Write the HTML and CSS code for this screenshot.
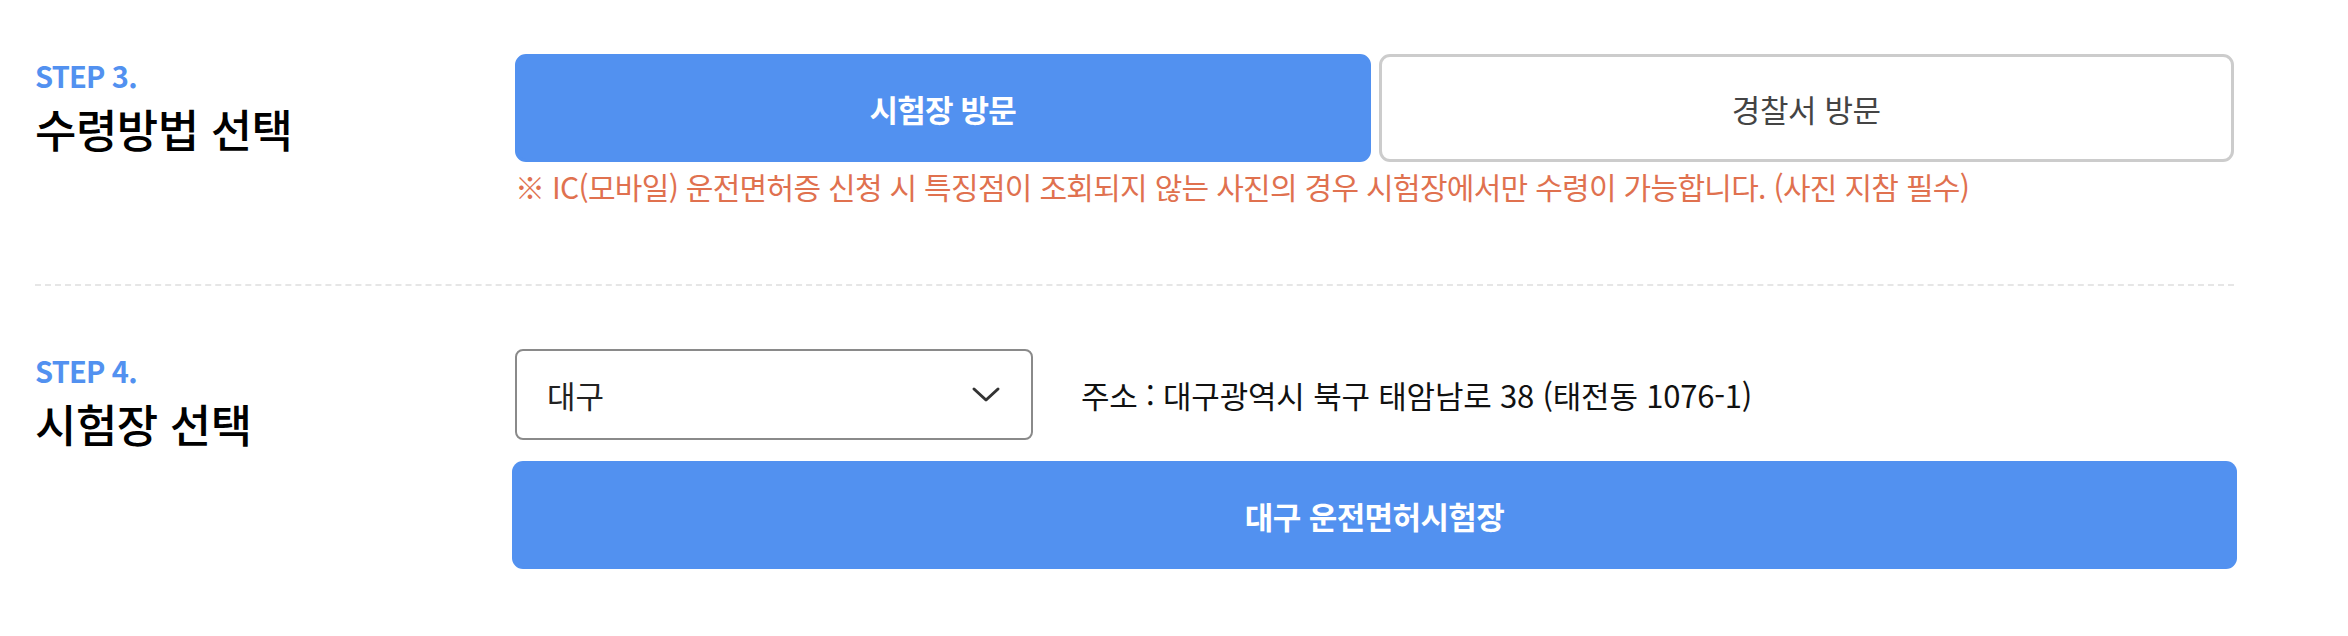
FILE: index.html
```html
<!DOCTYPE html>
<html lang="ko">
<head>
<meta charset="utf-8">
<title>수령방법 / 시험장 선택</title>
<link rel="stylesheet" href="styles.css">
</head>
<body>
<div class="page">
  <section class="step step-3">
    <div class="step-head">
      <p class="step-no">STEP 3.</p>
      <h2 class="step-title">수령방법 선택</h2>
    </div>
    <div class="step-body">
      <div class="toggle">
        <button class="opt opt-active" type="button">시험장 방문</button>
        <button class="opt" type="button">경찰서 방문</button>
      </div>
      <p class="note">※ IC(모바일) 운전면허증 신청 시 특징점이 조회되지 않는 사진의 경우 시험장에서만 수령이 가능합니다. (사진 지참 필수)</p>
    </div>
  </section>
  <div class="divider"></div>
  <section class="step step-4">
    <div class="step-head">
      <p class="step-no">STEP 4.</p>
      <h2 class="step-title">시험장 선택</h2>
    </div>
    <div class="step-body">
      <div class="select-row">
        <div class="select">
          <span class="select-value">대구</span>
          <svg class="chevron" width="30" height="18" viewBox="0 0 30 18" aria-hidden="true"><path d="M3 3 L15 14 L27 3" fill="none" stroke="#333" stroke-width="3" stroke-linecap="round" stroke-linejoin="round"/></svg>
        </div>
        <p class="addr">주소 : 대구광역시 북구 태암남로 38 (태전동 1076-1)</p>
      </div>
      <button class="center-btn" type="button">대구 운전면허시험장</button>
    </div>
  </section>
</div>
</body>
</html>
```

FILE: styles.css
```css
* { box-sizing: border-box; }
html, body { margin: 0; padding: 0; background: #fff; }
body {
  font-family: "Noto Sans CJK KR", "Noto Sans", sans-serif;
  color: #111;
}
.page {
  width: 2199px;
  margin-left: 35px;
  padding-top: 54px;
}
.step {
  display: flex;
  align-items: flex-start;
}
.step-head {
  width: 480px;
  flex: none;
  padding-top: 1px;
}
.step-no {
  margin: 0;
  font-size: 29px;
  line-height: 40px;
  font-weight: 600;
  color: #5291f0;
  letter-spacing: -0.8px;
}
.step-title {
  margin: 4px 0 0;
  font-size: 45px;
  line-height: 60px;
  font-weight: 500;
  color: #000;
  letter-spacing: -0.5px;
}
.step-body {
  flex: 1;
  min-width: 0;
}
.toggle {
  display: flex;
  gap: 8px;
}
.opt {
  flex: 1;
  height: 108px;
  border-radius: 11px;
  border: 3px solid #cccccc;
  background: #fff;
  color: #444;
  font-family: inherit;
  font-size: 31px;
  font-weight: 400;
  letter-spacing: -0.4px;
}
.opt-active {
  background: #5291f0;
  border-color: #5291f0;
  color: #fff;
  font-weight: 700;
  letter-spacing: -0.8px;
}
.note {
  margin: 3px 0 0;
  font-size: 30px;
  line-height: 42px;
  color: #e0714f;
  letter-spacing: -0.7px;
}
.divider {
  margin: 77px 0 63px;
  border-top: 2px dashed #e6e6e6;
}
.select-row {
  display: flex;
  align-items: center;
  gap: 48px;
}
.select {
  width: 518px;
  height: 91px;
  border: 2px solid #8a8a8a;
  border-radius: 8px;
  display: flex;
  align-items: center;
  justify-content: space-between;
  padding: 0 30px 0 30px;
}
.select-value {
  font-size: 31px;
  color: #222;
}
.addr {
  margin: 0;
  font-size: 31px;
  color: #111;
  letter-spacing: -0.2px;
}
.center-btn {
  display: block;
  width: calc(100% + 6px);
  margin: 21px -3px 0;
  height: 108px;
  border: none;
  border-radius: 11px;
  background: #5291f0;
  color: #fff;
  font-family: inherit;
  font-size: 31px;
  font-weight: 700;
  letter-spacing: -0.6px;
}
```
